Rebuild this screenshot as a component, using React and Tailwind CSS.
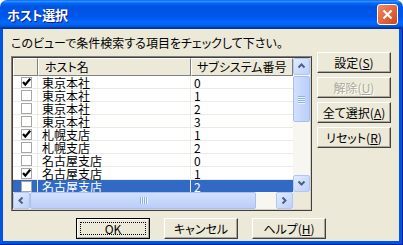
import React from "react";

const rows = [
  { name: "東京本社", num: "0", checked: true },
  { name: "東京本社", num: "1" },
  { name: "東京本社", num: "2" },
  { name: "東京本社", num: "3" },
  { name: "札幌支店", num: "1", checked: true },
  { name: "札幌支店", num: "2" },
  { name: "名古屋支店", num: "0" },
  { name: "名古屋支店", num: "1", checked: true },
  { name: "名古屋支店", num: "2", selected: true },
];

function CheckBox({ checked }) {
  return (
    <svg width="11" height="11" viewBox="0 0 11 11" className="block">
      <rect x="0.5" y="0.5" width="10" height="10" fill="#fff" stroke="#A6A6A6" />
      {checked && (
        <path d="M2 5 L4.3 7.6 L9.2 1.8" fill="none" stroke="#000" strokeWidth="2.2" />
      )}
    </svg>
  );
}

function Chevron({ dir }) {
  const d = {
    up: "M1.5 5.5 L4.5 2.5 L7.5 5.5",
    down: "M1.5 2.5 L4.5 5.5 L7.5 2.5",
    left: "M5.5 1.5 L2.5 4.5 L5.5 7.5",
    right: "M2.5 1.5 L5.5 4.5 L2.5 7.5",
  }[dir];
  return (
    <svg width="9" height="9" viewBox="0 0 9 9">
      <path d={d} fill="none" stroke="#4D6185" strokeWidth="2" />
    </svg>
  );
}

function ArrowBtn({ dir }) {
  return (
    <div className="w-[17px] h-[17px] shrink-0 flex items-center justify-center rounded-[2px] border border-[#B3C6F2] bg-[linear-gradient(135deg,#E3EBFE,#BCD0FA)]">
      <Chevron dir={dir} />
    </div>
  );
}

function Grip({ vertical }) {
  return (
    <div className={vertical ? "flex flex-col gap-[1px]" : "flex gap-[1px]"}>
      {[0, 1, 2, 3].map((i) => (
        <div
          key={i}
          className={vertical ? "w-[7px] h-[1px] bg-[#8CB0F8] shadow-[0_1px_#EEF4FE]" : "w-[1px] h-[7px] bg-[#8CB0F8] shadow-[1px_0_#EEF4FE]"}
        />
      ))}
    </div>
  );
}

function Button({ children, disabled, def }) {
  if (def) {
    return (
      <div className="w-[74px] h-[21px] flex border border-black bg-[#ECE9D8]">
        <div className="flex-1 flex border-t border-l border-white border-b border-r border-b-[#ACA899] border-r-[#ACA899] p-[2px]">
          <div className="flex-1 flex items-center justify-center border border-dotted border-black leading-[12px]">
            {children}
          </div>
        </div>
      </div>
    );
  }
  return (
    <div className="w-[74px] h-[21px] flex items-center justify-center bg-[#ECE9D8] border-t border-l border-white border-b border-r border-b-[#404040] border-r-[#404040] shadow-[inset_-1px_-1px_#ACA899] leading-[12px]">
      <span className={disabled ? "text-[#ACA899] [text-shadow:1px_1px_#fff]" : ""}>{children}</span>
    </div>
  );
}

export default function App() {
  return (
    <div className="w-[403px] h-[245px] flex flex-col bg-white font-['Noto_Sans_CJK_JP',sans-serif] text-[12px] text-black [font-feature-settings:'palt'] select-none">
      {/* title bar */}
      <div className="h-[29px] shrink-0 rounded-t-[7px] flex items-center pl-[7px] pr-[5px] bg-[linear-gradient(180deg,#0058EE_0%,#3593FF_4%,#288EFF_6%,#127DFF_8%,#036FFC_10%,#0262EE_14%,#0057E5_20%,#0054E3_24%,#0055EB_56%,#005BF5_66%,#026AFE_76%,#0062EF_86%,#0052D6_92%,#0040AB_94%,#003092_100%)]">
        <span className="flex-1 text-white font-bold text-[13px] leading-[16px] tracking-[-0.3px] [text-shadow:1px_1px_#0A1883]">ホスト選択</span>
        <div className="w-[21px] h-[21px] flex items-center justify-center rounded-[3px] border border-white bg-[linear-gradient(135deg,#F08A62,#D2451C)]">
          <svg width="11" height="11" viewBox="0 0 11 11">
            <path d="M1.5 1.5 L9.5 9.5 M9.5 1.5 L1.5 9.5" stroke="#fff" strokeWidth="2.2" />
          </svg>
        </div>
      </div>

      {/* frame */}
      <div className="flex-1 flex flex-col bg-[#0054E3] pl-[3px] pr-[4px] pb-[4px] shadow-[inset_-1px_-1px_#001E9E]">
        <div className="flex-1 flex flex-col bg-[#ECE9D8]">
          <div className="h-[23px] pt-[7px] pl-[8px] leading-[14px]">
            このビューで条件検索する項目をチェックして下さい。
          </div>

          <div className="flex pl-[8px]">
            {/* list view */}
            <div className="w-[301px] h-[155px] mt-[4px] flex flex-col border border-[#7F7F7F] border-b-[#404040] border-r-[#404040]">
              <div className="flex-1 flex flex-col border border-[#404040] border-b-[#D4D0C8] border-r-[#D4D0C8] bg-white">
                <div className="flex h-[134px]">
                  <div className="w-[280px] flex flex-col overflow-hidden">
                    <div className="h-[18px] shrink-0 flex bg-[#ECE9D8] leading-[14px]">
                      <div className="w-[25px] border-t border-l border-white border-r border-b border-r-[#808080] border-b-[#808080]" />
                      <div className="w-[153px] flex items-center pl-[6px] border-t border-l border-white border-r border-b border-r-[#808080] border-b-[#808080]">
                        ホスト名
                      </div>
                      <div className="w-[102px] flex items-center pl-[5px] border-t border-l border-white border-r border-b border-r-[#808080] border-b-[#808080]">
                        サブシステム番号
                      </div>
                    </div>
                    {rows.map((r, i) => (
                      <div
                        key={i}
                        className={`h-[13px] shrink-0 flex leading-[13px] ${r.selected ? "bg-[#316AC5] text-white" : "shadow-[inset_0_-1px_#ECEBE3]"}`}
                      >
                        <div className="w-[25px] flex items-center pl-[8px] shadow-[inset_-1px_0_#ECEBE3]">
                          <CheckBox checked={r.checked} />
                        </div>
                        <div className="w-[153px] pl-[4px] shadow-[inset_-1px_0_#ECEBE3]">{r.name}</div>
                        <div className="w-[102px] pl-[3px]">{r.num}</div>
                      </div>
                    ))}
                  </div>
                  {/* vertical scrollbar */}
                  <div className="w-[17px] flex flex-col bg-[#F7F6F1]">
                    <ArrowBtn dir="up" />
                    <div className="mt-[1px] h-[46px] flex items-center justify-center rounded-[2px] border border-[#A9BFF1] bg-[linear-gradient(90deg,#D3E0FD,#BACEF9)]">
                      <Grip vertical />
                    </div>
                    <div className="flex-1" />
                    <ArrowBtn dir="down" />
                  </div>
                </div>
                <div className="h-[17px] flex">
                  {/* horizontal scrollbar */}
                  <div className="w-[280px] flex bg-[#F7F6F1]">
                    <ArrowBtn dir="left" />
                    <div className="w-[226px] flex items-center justify-center rounded-[2px] border border-[#A9BFF1] bg-[linear-gradient(180deg,#D3E0FD,#BACEF9)]">
                      <Grip />
                    </div>
                    <div className="flex-1" />
                    <ArrowBtn dir="right" />
                  </div>
                  <div className="w-[17px] bg-[#ECE9D8]" />
                </div>
              </div>
            </div>

            {/* side buttons */}
            <div className="ml-[5px] flex flex-col gap-[4px]">
              <Button>
                設定(<span className="underline">S</span>)
              </Button>
              <Button disabled>
                解除(<span className="underline">U</span>)
              </Button>
              <Button>
                全て選択(<span className="underline">A</span>)
              </Button>
              <Button>
                リセット(<span className="underline">R</span>)
              </Button>
            </div>
          </div>

          <div className="mt-[7px] flex justify-center gap-[14px]">
            <Button def>OK</Button>
            <Button>キャンセル</Button>
            <Button>
              ヘルプ(<span className="underline">H</span>)
            </Button>
          </div>
        </div>
      </div>
    </div>
  );
}
